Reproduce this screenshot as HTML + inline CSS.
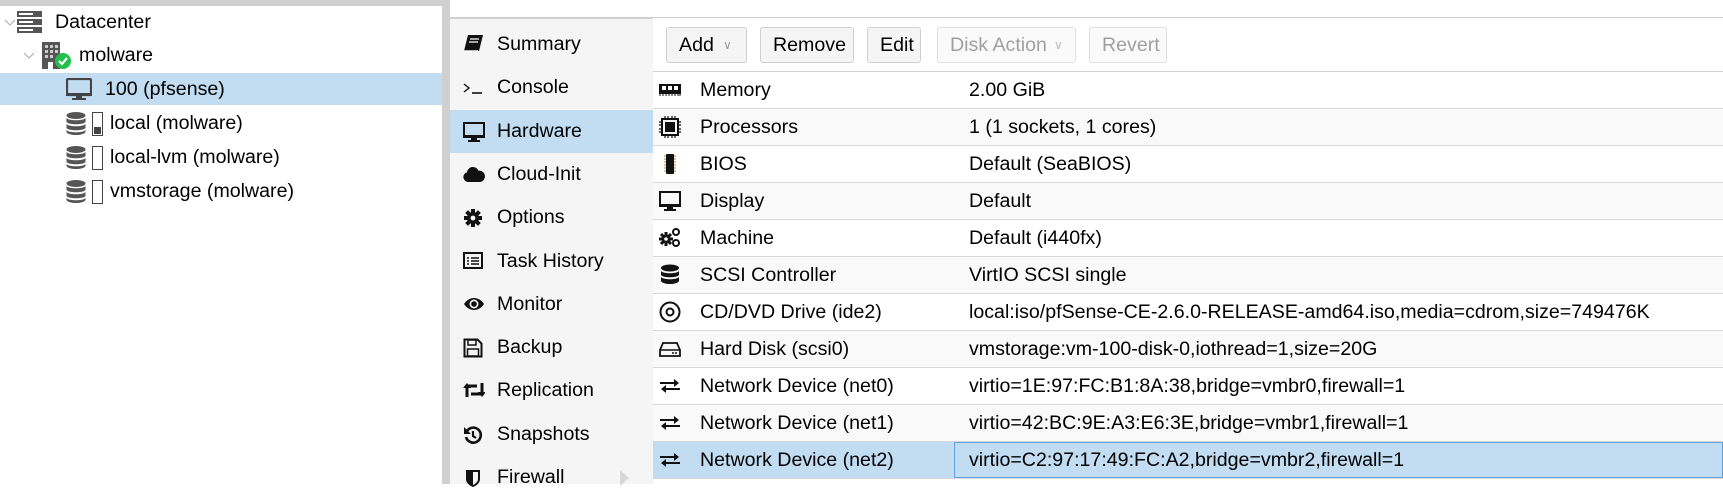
<!DOCTYPE html>
<html><head><meta charset="utf-8"><style>
*{margin:0;padding:0;box-sizing:border-box}
body{width:1723px;height:484px;overflow:hidden;background:#fff;font-family:"Liberation Sans",Arial,sans-serif;font-size:19.6px;color:#000;position:relative}
.abs{position:absolute}
.tree{left:0;top:0;width:442px;height:484px;background:#fff;border-top:6px solid #d0d0d0}
.vbar{left:442px;top:0;width:8px;height:484px;background:#d0d0d0}
.trow{position:absolute;left:0;width:442px;height:33px;line-height:33px;white-space:nowrap}
.trow svg{position:absolute}
.trow span{position:absolute}
.nav{left:450px;top:18px;width:203px;height:466px;background:#f5f5f5;border-top:1px solid #d0d0d0}
.ni{position:absolute;left:0;width:203px;height:43.3px;line-height:43.3px}
.ni svg{position:absolute;left:13px;top:12px}
.ni span{position:absolute;left:47px}
.topline{left:450px;top:17px;width:1273px;height:1px;background:#d0d0d0}
.tb{left:653px;top:18px;width:1070px;height:54px;background:#fff;border-bottom:1px solid #d0d0d0}
.btn{position:absolute;top:9px;height:36px;border:1px solid #cfcfcf;border-radius:3px;background:#f5f5f5;line-height:34px;padding-left:12px;white-space:nowrap}
.btn.dis{color:#a0a0a0;border-color:#e0e0e0;background:#fafafa}
.chev{position:absolute;top:0;font-size:12px;color:#999}
.grid{left:653px;top:72px;width:1070px;height:412px}
.gr{position:absolute;left:0;width:1070px;height:37px;line-height:36px;border-bottom:1px solid #d8d8d8;white-space:nowrap}
.gr:nth-child(even){background:#f9f9f9}
.gr svg{position:absolute;left:4px;top:7px}
.gr .n{position:absolute;left:47px}
.gr .v{position:absolute;left:316px}
.gr.sel{background:#c2ddf2!important}
.gr.sel .cell{position:absolute;left:301px;top:0;width:769px;height:36px;border:1px solid #5fa2dd}
</style></head><body>
<div class="abs tree">
 <div class="trow" style="top:0px">
  <svg style="left:4px;top:12px" width="12" height="10" viewBox="0 0 12 10"><path d="M1 2l5 5 5-5" fill="none" stroke="#aaa" stroke-width="1"/></svg>
  <svg style="left:17px;top:5px" width="25" height="22" viewBox="0 0 25 22"><g fill="#555"><rect x="0" y="0" width="25" height="6"/><rect x="0" y="8" width="25" height="6"/><rect x="0" y="16" width="25" height="6"/></g><g fill="#fff"><rect x="2" y="2" width="14" height="2"/><rect x="2" y="10" width="14" height="2"/><rect x="2" y="18" width="14" height="2"/></g></svg>
  <span style="left:55px">Datacenter</span></div>
 <div class="trow" style="top:33px">
  <svg style="left:23px;top:12px" width="12" height="10" viewBox="0 0 12 10"><path d="M1 2l5 5 5-5" fill="none" stroke="#aaa" stroke-width="1"/></svg>
  <svg style="left:42px;top:3px" width="30" height="28" viewBox="0 0 30 28"><rect x="0" y="0" width="18" height="27" fill="#555"/><g fill="#ccc"><rect x="3" y="3" width="3" height="3"/><rect x="8" y="3" width="3" height="3"/><rect x="13" y="3" width="3" height="3"/><rect x="3" y="8" width="3" height="3"/><rect x="8" y="8" width="3" height="3"/><rect x="13" y="8" width="3" height="3"/><rect x="3" y="13" width="3" height="3"/><rect x="8" y="13" width="3" height="3"/><rect x="6" y="20" width="5" height="7" fill="#fff"/></g><circle cx="21" cy="19" r="8" fill="#21bf4b"/><path d="M17 19l3 3 5-6" fill="none" stroke="#fff" stroke-width="2.2"/></svg>
  <span style="left:79px">molware</span></div>
 <div class="trow" style="top:67px;background:#c2ddf2;height:32px">
  <svg style="left:66px;top:5px" width="26" height="23" viewBox="0 0 26 23"><rect x="1" y="1" width="24" height="16" rx="1" fill="none" stroke="#444" stroke-width="2.2"/><rect x="0" y="15" width="26" height="3" fill="#444"/><rect x="10" y="18" width="6" height="3" fill="#444"/><rect x="6" y="20" width="14" height="2" fill="#444"/></svg>
  <span style="left:105px">100 (pfsense)</span></div>
 <div class="trow" style="top:101px">
  <svg style="left:66px;top:5px" width="40" height="24" viewBox="0 0 40 24"><g fill="#555"><ellipse cx="10" cy="3.5" rx="9.5" ry="3.5"/><path d="M0.5 6c2 3 17 3 19 0v4c-2 3-17 3-19 0z"/><path d="M0.5 12c2 3 17 3 19 0v4c-2 3-17 3-19 0z"/><path d="M0.5 18c2 3 17 3 19 0v2c-2 4-17 4-19 0z"/></g><rect x="26.5" y="0.5" width="10" height="23" fill="#fff" stroke="#444"/><rect x="28" y="15" width="7" height="7" fill="#444"/></svg>
  <span style="left:110px">local (molware)</span></div>
 <div class="trow" style="top:135px">
  <svg style="left:66px;top:5px" width="40" height="24" viewBox="0 0 40 24"><g fill="#555"><ellipse cx="10" cy="3.5" rx="9.5" ry="3.5"/><path d="M0.5 6c2 3 17 3 19 0v4c-2 3-17 3-19 0z"/><path d="M0.5 12c2 3 17 3 19 0v4c-2 3-17 3-19 0z"/><path d="M0.5 18c2 3 17 3 19 0v2c-2 4-17 4-19 0z"/></g><rect x="26.5" y="0.5" width="10" height="23" fill="#fff" stroke="#444"/></svg>
  <span style="left:110px">local-lvm (molware)</span></div>
 <div class="trow" style="top:169px">
  <svg style="left:66px;top:5px" width="40" height="24" viewBox="0 0 40 24"><g fill="#555"><ellipse cx="10" cy="3.5" rx="9.5" ry="3.5"/><path d="M0.5 6c2 3 17 3 19 0v4c-2 3-17 3-19 0z"/><path d="M0.5 12c2 3 17 3 19 0v4c-2 3-17 3-19 0z"/><path d="M0.5 18c2 3 17 3 19 0v2c-2 4-17 4-19 0z"/></g><rect x="26.5" y="0.5" width="10" height="23" fill="#fff" stroke="#444"/></svg>
  <span style="left:110px">vmstorage (molware)</span></div>
</div>
<div class="abs vbar"></div>
<div class="abs topline"></div>
<div class="abs nav">
 <div class="ni" style="top:4px"><svg width="20" height="18" viewBox="0 0 20 18"><path d="M5 0h15l-4 16H1z" fill="#111"/><path d="M1 16h14" stroke="#fff" stroke-width="1.4"/><path d="M7 4h9M6 7h9" stroke="#fff" stroke-width="1.2"/></svg><span>Summary</span></div>
 <div class="ni" style="top:47.3px"><svg width="22" height="18" viewBox="0 0 22 18"><path d="M1 6l5 4-5 4" fill="none" stroke="#111" stroke-width="1.4"/><path d="M9 15h10" stroke="#111" stroke-width="1.6"/></svg><span>Console</span></div>
 <div class="ni" style="top:90.6px;background:#c2ddf2"><svg width="22" height="20" viewBox="0 0 22 20"><rect x="1" y="1" width="20" height="13" fill="none" stroke="#111" stroke-width="2"/><rect x="0" y="13" width="22" height="3" fill="#111"/><rect x="8" y="16" width="6" height="2" fill="#111"/><rect x="5" y="18" width="12" height="2" fill="#111"/></svg><span>Hardware</span></div>
 <div class="ni" style="top:133.9px"><svg width="22" height="18" viewBox="0 0 22 18"><path d="M5 17a5 5 0 0 1-1-9.8 6 6 0 0 1 11.5-1.5A5.5 5.5 0 0 1 17 17z" fill="#111"/></svg><span>Cloud-Init</span></div>
 <div class="ni" style="top:177.2px"><svg width="20" height="20" viewBox="0 0 20 20"><g stroke="#111" stroke-width="4"><path d="M10 1v18M1 10h18M3.6 3.6l12.8 12.8M16.4 3.6L3.6 16.4"/></g><circle cx="10" cy="10" r="6" fill="#111"/><circle cx="10" cy="10" r="2.4" fill="#f5f5f5"/></svg><span>Options</span></div>
 <div class="ni" style="top:220.5px"><svg width="20" height="18" viewBox="0 0 20 18"><rect x="1" y="1" width="18" height="15" fill="none" stroke="#111" stroke-width="2"/><path d="M4 6h2M8 6h8M4 9h2M8 9h8M4 12h2M8 12h8" stroke="#111" stroke-width="1.6"/></svg><span>Task History</span></div>
 <div class="ni" style="top:263.8px"><svg width="22" height="18" viewBox="0 0 22 18"><path d="M1 9c5-8 15-8 20 0-5 8-15 8-20 0z" fill="#111"/><circle cx="11" cy="9" r="4.5" fill="#f5f5f5"/><circle cx="11" cy="9" r="2.8" fill="#111"/></svg><span>Monitor</span></div>
 <div class="ni" style="top:307.1px"><svg width="20" height="20" viewBox="0 0 20 20"><path d="M1.5 1.5h13l4 4v13h-17z" fill="none" stroke="#111" stroke-width="2"/><rect x="5" y="2" width="8" height="5" fill="none" stroke="#111" stroke-width="1.5"/><rect x="4.5" y="11" width="11" height="7" fill="none" stroke="#111" stroke-width="1.5"/></svg><span>Backup</span></div>
 <div class="ni" style="top:350.4px"><svg width="22" height="18" viewBox="0 0 22 18"><path d="M4 16V5h10M19 2v11H8" fill="none" stroke="#111" stroke-width="3"/><path d="M0 7l4-5 4 5zM15 11l4 5 4-5z" fill="#111"/></svg><span>Replication</span></div>
 <div class="ni" style="top:393.7px"><svg width="20" height="20" viewBox="0 0 20 20"><path d="M4 6a7.5 7.5 0 1 1-1 6" fill="none" stroke="#111" stroke-width="2.6"/><path d="M1 2v7h7z" fill="#111"/><path d="M10 6v5l3 2" fill="none" stroke="#111" stroke-width="2.2"/></svg><span>Snapshots</span></div>
 <div class="ni" style="top:437px"><svg width="20" height="20" viewBox="0 0 20 20"><path d="M3 2h14v9c0 4-4 7-7 8-3-1-7-4-7-8z" fill="#111"/><path d="M10 4h5v7c0 3-3 5-5 6z" fill="#f5f5f5"/></svg><span>Firewall</span><svg style="left:170px;top:14px" width="10" height="16" viewBox="0 0 10 16"><path d="M0 0l9 8-9 8z" fill="#d8d8d8"/></svg></div>
</div>
<div class="abs tb">
 <div class="btn" style="left:13px;width:81px">Add<span class="chev" style="left:56px">&#8744;</span></div>
 <div class="btn" style="left:107px;width:94px">Remove</div>
 <div class="btn" style="left:214px;width:54px">Edit</div>
 <div class="btn dis" style="left:284px;width:139px">Disk Action<span class="chev" style="left:116px;color:#bbb">&#8744;</span></div>
 <div class="btn dis" style="left:436px;width:78px">Revert</div>
</div>
<div class="abs grid">
 <div class="gr" style="top:0"><svg width="26" height="22" viewBox="0 0 26 22"><rect x="2" y="5" width="22" height="10" fill="#111"/><rect x="5" y="7" width="4" height="4" fill="#fff"/><rect x="11" y="7" width="4" height="4" fill="#fff"/><rect x="17" y="7" width="4" height="4" fill="#fff"/><path d="M3 15v2M6 15v2M9 15v2M12 15v2M15 15v2M18 15v2M21 15v2M23 15v2" stroke="#111"/></svg><span class="n">Memory</span><span class="v">2.00 GiB</span></div>
 <div class="gr" style="top:37px"><svg width="26" height="22" viewBox="0 0 26 22"><rect x="5" y="3" width="16" height="16" fill="none" stroke="#111" stroke-width="2"/><rect x="8" y="6" width="10" height="10" fill="#111"/><path d="M8 0v3M11 0v3M15 0v3M18 0v3M8 19v3M11 19v3M15 19v3M18 19v3M2 6h3M2 9h3M2 13h3M2 16h3M21 6h3M21 9h3M21 13h3M21 16h3" stroke="#111" stroke-width="1.2"/></svg><span class="n">Processors</span><span class="v">1 (1 sockets, 1 cores)</span></div>
 <div class="gr" style="top:74px"><svg width="26" height="22" viewBox="0 0 26 22"><rect x="9" y="1" width="8" height="20" rx="1" fill="#111"/><path d="M7 3h2M7 6h2M7 9h2M7 12h2M7 15h2M7 18h2M17 3h2M17 6h2M17 9h2M17 12h2M17 15h2M17 18h2" stroke="#c08020" stroke-width="1"/></svg><span class="n">BIOS</span><span class="v">Default (SeaBIOS)</span></div>
 <div class="gr" style="top:111px"><svg width="26" height="22" viewBox="0 0 26 22"><rect x="3" y="2" width="20" height="13" fill="none" stroke="#111" stroke-width="2"/><rect x="2" y="14" width="22" height="3" fill="#111"/><rect x="10" y="17" width="6" height="2" fill="#111"/><rect x="7" y="19" width="12" height="2" fill="#111"/></svg><span class="n">Display</span><span class="v">Default</span></div>
 <div class="gr" style="top:148px"><svg width="26" height="22" viewBox="0 0 26 22"><g stroke="#111" stroke-width="3"><path d="M9 5v14M2 12h14M4 7l10 10M14 7L4 17"/></g><circle cx="9" cy="12" r="4.5" fill="#111"/><circle cx="9" cy="12" r="1.8" fill="#fff"/><circle cx="19" cy="5" r="3" fill="none" stroke="#111" stroke-width="2"/><circle cx="19" cy="16" r="3" fill="none" stroke="#111" stroke-width="2"/></svg><span class="n">Machine</span><span class="v">Default (i440fx)</span></div>
 <div class="gr" style="top:185px"><svg width="26" height="22" viewBox="0 0 26 22"><g fill="#111"><ellipse cx="13" cy="4" rx="9" ry="3.5"/><path d="M4 7c2 3 16 3 18 0v4c-2 3-16 3-18 0z"/><path d="M4 13c2 3 16 3 18 0v4c-2 4-16 4-18 0z"/></g></svg><span class="n">SCSI Controller</span><span class="v">VirtIO SCSI single</span></div>
 <div class="gr" style="top:222px"><svg width="26" height="22" viewBox="0 0 26 22"><circle cx="13" cy="11" r="9.5" fill="none" stroke="#111" stroke-width="2"/><circle cx="13" cy="11" r="3.5" fill="none" stroke="#111" stroke-width="2"/></svg><span class="n">CD/DVD Drive (ide2)</span><span class="v">local:iso/pfSense-CE-2.6.0-RELEASE-amd64.iso,media=cdrom,size=749476K</span></div>
 <div class="gr" style="top:259px"><svg width="26" height="22" viewBox="0 0 26 22"><path d="M6 5h14l3 7v6H3v-6z" fill="none" stroke="#111" stroke-width="1.8"/><path d="M3 12h20" stroke="#111" stroke-width="1.6"/><path d="M15 15h2M18 15h2" stroke="#111" stroke-width="1.4"/></svg><span class="n">Hard Disk (scsi0)</span><span class="v">vmstorage:vm-100-disk-0,iothread=1,size=20G</span></div>
 <div class="gr" style="top:296px"><svg width="26" height="22" viewBox="0 0 26 22"><path d="M3 8h17M6 14h17" stroke="#111" stroke-width="2"/><path d="M17 4l5 4-5 4zM9 10l-5 4 5 4z" fill="#111"/></svg><span class="n">Network Device (net0)</span><span class="v">virtio=1E:97:FC:B1:8A:38,bridge=vmbr0,firewall=1</span></div>
 <div class="gr" style="top:333px"><svg width="26" height="22" viewBox="0 0 26 22"><path d="M3 8h17M6 14h17" stroke="#111" stroke-width="2"/><path d="M17 4l5 4-5 4zM9 10l-5 4 5 4z" fill="#111"/></svg><span class="n">Network Device (net1)</span><span class="v">virtio=42:BC:9E:A3:E6:3E,bridge=vmbr1,firewall=1</span></div>
 <div class="gr sel" style="top:370px"><div class="cell"></div><svg width="26" height="22" viewBox="0 0 26 22"><path d="M3 8h17M6 14h17" stroke="#111" stroke-width="2"/><path d="M17 4l5 4-5 4zM9 10l-5 4 5 4z" fill="#111"/></svg><span class="n">Network Device (net2)</span><span class="v">virtio=C2:97:17:49:FC:A2,bridge=vmbr2,firewall=1</span></div>
</div>
</body></html>
